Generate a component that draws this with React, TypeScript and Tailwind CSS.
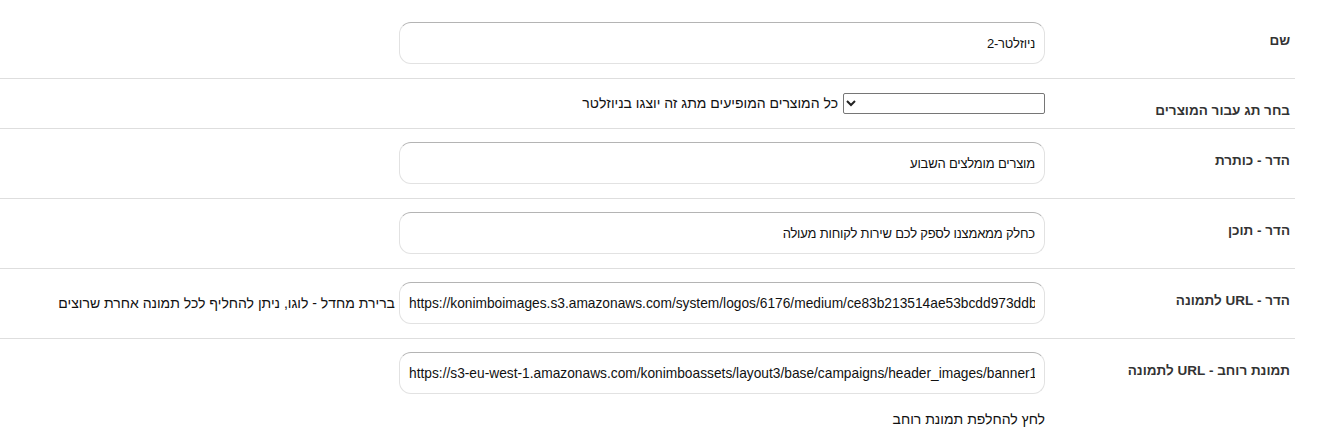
import React from 'react'

const FONT = { fontFamily: '"Liberation Sans", Arial, sans-serif' }

function Row({ label, children, last }: { label: string; children: React.ReactNode; last?: boolean }) {
  return (
    <div className={'flex items-start ' + (last ? '' : 'border-b border-[#dedede]')}>
      <div className="w-[250px] shrink-0 pr-[5px] pt-[24px] pb-[10px] text-[13.5px] font-bold text-[#333] leading-[15px]">
        {label}
      </div>
      <div className="flex-1 pt-[13px] pb-[14px]">{children}</div>
    </div>
  )
}

function TextBox({ value, ltr }: { value: string; ltr?: boolean }) {
  return (
    <input
      readOnly
      value={value}
      dir={ltr ? 'ltr' : 'rtl'}
      className={
        'w-[646px] h-[42px] rounded-[12px] border border-[#e2e2e2] border-t-[#b4b4b4] bg-white px-[9px] text-[#111] outline-none ' +
        (ltr ? 'text-[13.75px]' : 'text-[13px] tracking-[-0.2px]')
      }
      style={FONT}
    />
  )
}

export default function App() {
  return (
    <div dir="rtl" className="w-[1295px] bg-white pt-[9px] text-[#222]" style={FONT}>
      <Row label="שם">
        <TextBox value="ניוזלטר-2" />
      </Row>

      <Row label="בחר תג עבור המוצרים">
        <div className="flex items-center gap-[5px] pt-px">
          <select
            className="w-[202px] h-[21px] rounded-[2px] border border-[#767676] bg-white text-[13px]"
            style={FONT}
          >
            <option></option>
          </select>
          <span className="text-[14px] text-[#111]">כל המוצרים המופיעים מתג זה יוצגו בניוזלטר</span>
        </div>
      </Row>

      <Row label="הדר - כותרת">
        <TextBox value="מוצרים מומלצים השבוע" />
      </Row>

      <Row label="הדר - תוכן">
        <TextBox value="כחלק ממאמצנו לספק לכם שירות לקוחות מעולה" />
      </Row>

      <Row label="הדר - URL לתמונה">
        <div className="flex items-center gap-[4px]">
          <TextBox ltr value="https://konimboimages.s3.amazonaws.com/system/logos/6176/medium/ce83b213514ae53bcdd973ddb6c1f0a7.png" />
          <span className="text-[14px] text-[#111]">ברירת מחדל - לוגו, ניתן להחליף לכל תמונה אחרת שרוצים</span>
        </div>
      </Row>

      <Row label="תמונת רוחב - URL לתמונה" last>
        <TextBox ltr value="https://s3-eu-west-1.amazonaws.com/konimboassets/layout3/base/campaigns/header_images/banner1.jpg" />
        <div className="mt-[15px] text-[14px] text-[#111]">לחץ להחלפת תמונת רוחב</div>
      </Row>
    </div>
  )
}
